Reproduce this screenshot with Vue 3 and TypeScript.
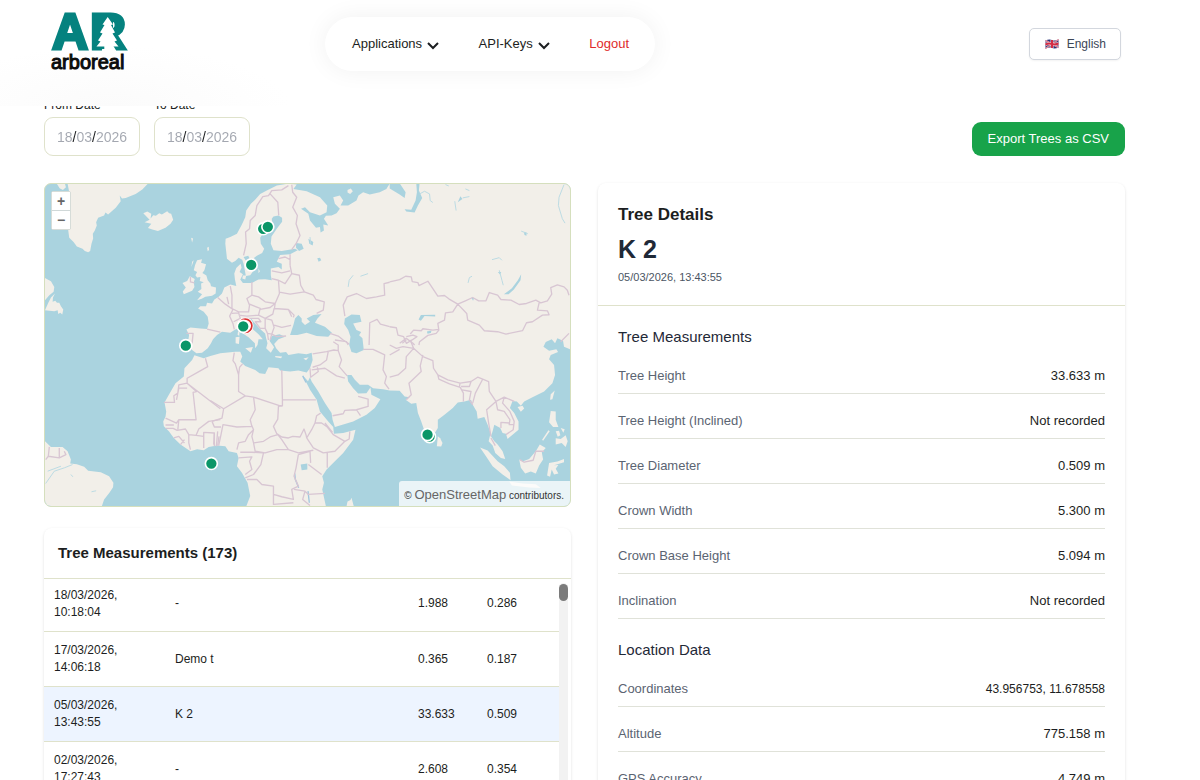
<script setup lang="ts">
import { ref } from 'vue'

interface TreeRow {
  id: number
  date: string
  time: string
  name: string
  height: string
  diameter: string
}

interface Detail {
  label: string
  value: string
  compact?: boolean
}

interface Section {
  title: string
  rows: Detail[]
}

const fromDate = ref('18/03/2026')
const toDate = ref('18/03/2026')
const selected = ref(3)

const trees: TreeRow[] = [
  { id: 1, date: '18/03/2026,', time: '10:18:04', name: '-', height: '1.988', diameter: '0.286' },
  { id: 2, date: '17/03/2026,', time: '14:06:18', name: 'Demo t', height: '0.365', diameter: '0.187' },
  { id: 3, date: '05/03/2026,', time: '13:43:55', name: 'K 2', height: '33.633', diameter: '0.509' },
  { id: 4, date: '02/03/2026,', time: '17:27:43', name: '-', height: '2.608', diameter: '0.354' },
]

const sections: Section[] = [
  {
    title: 'Tree Measurements',
    rows: [
      { label: 'Tree Height', value: '33.633 m' },
      { label: 'Tree Height (Inclined)', value: 'Not recorded' },
      { label: 'Tree Diameter', value: '0.509 m' },
      { label: 'Crown Width', value: '5.300 m' },
      { label: 'Crown Base Height', value: '5.094 m' },
      { label: 'Inclination', value: 'Not recorded' },
    ],
  },
  {
    title: 'Location Data',
    rows: [
      { label: 'Coordinates', value: '43.956753, 11.678558', compact: true },
      { label: 'Altitude', value: '775.158 m' },
      { label: 'GPS Accuracy', value: '4.749 m' },
    ],
  },
]

const markers = [
  { x: 789, y: 685 },
  { x: 803, y: 679 },
  { x: 753, y: 794 },
  { x: 556, y: 1037 },
  { x: 633, y: 1392 },
  { x: 1290, y: 1311 },
  { x: 1284, y: 1305 },
]
</script>

<template>
  <div class="page">
    <header class="topbar">
      <a class="logo" href="#" aria-label="arboreal home">
        <svg viewBox="0 0 78 62" width="78" height="62">
          <text x="1" y="37" class="logo-mark">A</text>
          <text x="39" y="37" class="logo-mark">R</text>
          <path d="M46 6 H62 V22 H58 V37 H46 Z" fill="#05827f" />
          <path
            d="M56.7 5 L62 12.500 L60 13 L64 20.500 L61.500 21.500 L66 28.500 L63.500 29.500 L67.500 34.500 L59.700 34.500 L59.700 39 L53.300 39 L53.300 34.500 L45.500 34.500 L49.500 29.500 L47 28.500 L51.500 21.500 L49 20.500 L53.500 13 L51.500 12.500 Z"
            fill="#fff"
          />
          <text x="0" y="57" class="logo-word">arboreal</text>
        </svg>
      </a>
      <nav class="menu">
        <button type="button" class="menu-item">
          Applications
          <svg viewBox="0 0 12 12" width="12" height="12"><path d="M1 4 L6 9 L11 4" /></svg>
        </button>
        <button type="button" class="menu-item">
          API-Keys
          <svg viewBox="0 0 12 12" width="12" height="12"><path d="M1 4 L6 9 L11 4" /></svg>
        </button>
        <a href="#" class="logout">Logout</a>
      </nav>
      <button type="button" class="language">
        <svg viewBox="0 0 28 20" width="14" height="10">
          <path d="M1 3 Q8 0 14 2 T27 1 V17 Q20 20 14 18 T1 19 Z" fill="#29337a" />
          <path d="M1 3 L27 17 M27 1 L1 19" stroke="#e8b9c4" stroke-width="3" />
          <path d="M1 3 L27 17 M27 1 L1 19" stroke="#d22c44" stroke-width="1" />
          <path d="M14 2 V18 M1 11 Q8 8 14 10 T27 9" stroke="#f3d5da" stroke-width="6" fill="none" />
          <path d="M14 2 V18 M1 11 Q8 8 14 10 T27 9" stroke="#d22c44" stroke-width="4" fill="none" />
        </svg>
        English
      </button>
    </header>

    <main class="content">
      <div class="filters">
        <div class="field">
          <label for="from-date">From Date</label>
          <input id="from-date" v-model="fromDate" type="text" />
        </div>
        <div class="field">
          <label for="to-date">To Date</label>
          <input id="to-date" v-model="toDate" type="text" />
        </div>
        <button type="button" class="export">Export Trees as CSV</button>
      </div>

      <div class="columns">
        <div class="left">
          <section class="map" aria-label="Map of measured trees">
            <svg class="world" viewBox="132 549 1581 972" preserveAspectRatio="xMidYMid slice">
              <g class="land">
                <!-- Greenland, Iceland, Newfoundland -->
                <path d="M200 549 L206 580 L202 690 L205 712 L218 725 L228 738 L245 745 L252 752 L262 756 L268 752 L272 730 L277 714 L276 700 L282 690 L288 675 L286 665 L292 652 L310 645 L314 636 L322 642 L345 622 L360 602 L357 585 L364 594 L375 592 L405 580 L425 567 L442 549 Z" />
                <path d="M168 550 L176 563 L186 568 L195 560 L192 549 Z" />
                <path d="M428 638 L440 633 L452 640 L450 654 L458 644 L466 646 L476 638 L484 642 L500 632 L506 638 L512 640 L518 658 L510 670 L495 682 L472 692 L455 687 L442 683 L452 670 L432 665 L447 658 Z" />
                <path d="M132 833 L140 838 L150 843 L160 860 L158 875 L145 885 L132 900 Z" />
                <path d="M162 880 L156 892 L155 905 L163 902 L168 908 L175 908 L180 918 L187 928 L184 943 L178 938 L172 942 L170 930 L160 933 L132 930 L142 908 L150 892 Z" />
                <!-- British Isles -->
                <path d="M590 780 L605 777 L602 787 L617 792 L612 810 L606 818 L618 826 L622 840 L630 850 L632 858 L647 862 L646 880 L635 887 L615 890 L604 896 L590 900 L600 888 L605 882 L592 875 L603 866 L602 850 L610 846 L598 842 L600 830 L590 832 L585 825 L590 815 L580 810 L584 794 Z" />
                <path d="M568 828 L583 836 L580 846 L582 860 L575 872 L550 882 L547 874 L556 862 L546 848 L560 842 Z" />
                <path d="M572 712 l6 2 l-3 12 z M620 742 l5 -3 l1 10 l-4 4 z M575 784 l5 -4 l-7 20 z" />
                <!-- Eurasia and Africa -->
                <path
                  d="M588 1060 L575 1050 L562 1030 L566 1005 L558 988 L570 982 L600 985 L620 987 L625 970 L622 950 L610 935 L593 925 L600 918 L617 918 L620 908 L635 910 L642 898 L655 890 L665 880 L672 862 L690 853 L708 857 L704 838 L702 820 L708 803 L721 790 L724 802 L718 815 L728 822 L720 838 L728 848 L755 848 L775 838 L795 837 L815 840 L812 825 L812 805 L835 800 L845 808 L845 790 L830 784 L840 764 L870 762 L893 750 L885 745 L845 752 L820 750 L812 730 L814 708 L830 685 L835 678 L846 664 L846 652 L835 645 L820 648 L815 655 L818 680 L788 700 L780 712 L782 730 L792 745 L786 758 L770 766 L762 772 L768 800 L750 825 L737 827 L730 790 L726 778 L715 772 L705 782 L695 787 L680 775 L675 730 L676 715 L690 710 L710 700 L725 672 L735 650 L738 630 L752 610 L764 598 L780 580 L800 570 L830 555 L865 549 L890 552 L880 565 L920 572 L960 590 L982 615 L980 635 L960 645 L930 635 L915 620 L903 625 L925 640 L930 660 L948 682 L960 680 L962 696 L972 690 L970 672 L985 675 L972 655 L978 646 L995 645 L1010 638 L1020 625 L1005 610 L1000 590 L1020 585 L1030 600 L1022 615 L1045 615 L1070 600 L1076 585 L1090 575 L1110 582 L1140 575 L1160 565 L1170 549 L1713 549
                  L1713 1048 L1695 1040 L1692 1022 L1675 1015 L1668 1030 L1658 1018 L1640 1026 L1633 1040 L1650 1052 L1672 1048 L1677 1056 L1655 1065 L1650 1078 L1665 1095 L1668 1125 L1660 1150 L1635 1175 L1600 1192 L1575 1205 L1565 1218 L1553 1205 L1540 1204 L1532 1225 L1545 1240 L1558 1265 L1558 1290 L1540 1305 L1525 1318 L1520 1302 L1510 1300 L1503 1285 L1485 1275 L1480 1295 L1475 1310 L1485 1325 L1495 1335 L1510 1355 L1518 1378 L1505 1375 L1488 1360 L1480 1338 L1468 1325 L1474 1300 L1465 1275 L1455 1252 L1435 1257 L1432 1235 L1420 1215 L1415 1200 L1395 1205 L1375 1208 L1360 1225 L1335 1245 L1315 1260 L1315 1285 L1300 1310 L1290 1322 L1275 1295 L1265 1265 L1255 1240 L1250 1210 L1235 1212 L1218 1200 L1230 1192 L1215 1190 L1200 1173 L1170 1172
                  L1150 1168 L1120 1165 L1105 1155 L1080 1155 L1065 1140 L1055 1125 L1042 1125 L1045 1145 L1060 1165 L1075 1181 L1100 1180 L1112 1163 L1115 1185 L1142 1198 L1125 1225 L1100 1245 L1060 1265 L1005 1282 L998 1260 L995 1240 L975 1210 L955 1175 L935 1145 L930 1132 L924 1144 L908 1126 L930 1170 L950 1200 L960 1235 L985 1265 L1000 1282 L1002 1302 L1030 1300 L1067 1290 L1060 1320 L1030 1360 L1005 1385 L980 1410 L967 1430 L972 1450 L967 1470 L978 1521
                  L738 1521 L750 1490 L742 1450 L725 1420 L710 1400 L715 1375 L710 1360 L685 1355 L675 1340 L650 1338 L625 1342 L610 1352 L590 1349 L570 1355 L540 1335 L520 1315 L505 1295 L490 1280 L488 1265 L495 1250 L497 1235 L492 1208 L505 1185 L525 1150 L550 1130 L552 1105 L575 1080 L582 1066 L610 1075 L630 1068 L660 1060 L705 1055 L720 1055 L726 1070 L720 1085 L735 1098 L765 1110 L778 1120 L795 1122 L805 1102 L835 1105 L840 1112 L870 1115 L895 1112 L920 1118 L930 1105 L938 1080 L935 1058 L920 1063 L895 1060 L865 1065 L858 1056 L840 1058 L828 1045 L822 1032 L835 1018 L855 1010 L838 1003 L815 1008 L808 1022 L822 1042 L812 1058 L798 1045 L802 1030 L798 1015 L795 1000 L778 985 L760 965 L753 955 L747 962 L755 985 L775 1003 L788 1018 L775 1018 L772 1035 L765 1045 L764 1030 L745 1012 L728 1000 L715 985 L705 988 L690 998 L665 995 L650 1005 L638 1018 L632 1030 L622 1045 L605 1058 Z"
                />
                <path d="M735 1045 L758 1041 L752 1058 Z M706 1012 L718 1010 L716 1032 L706 1030 Z M713 995 L718 993 L717 1007 L712 1005 Z M825 1068 L846 1070 L843 1075 L826 1072 Z M910 1076 L926 1072 L918 1081 Z" />
                <path d="M728 826 l10 0 l-3 12 l-9 -3 z M1043 568 l10 -4 l6 8 l-8 8 l-8 -4 z M775 805 l4 8 l-4 6 z" />
                <!-- South America -->
                <path d="M132 1325 L150 1342 L185 1342 L200 1355 L210 1380 L208 1392 L228 1394 L250 1402 L262 1414 L300 1418 L325 1430 L338 1450 L337 1463 L326 1480 L310 1500 L303 1521 L132 1521 Z" />
                <path d="M1040 1521 L1043 1506 L1052 1502 L1055 1495 L1062 1521 Z" />
                <!-- South-East Asia -->
                <g transform="translate(1170 1020)">
                  <path d="M145 290 L152 296 L159 310 L155 321 L142 320 Z" />
                  <path d="M385 202 L400 198 L405 206 L395 216 Z M497 152 L490 178 L483 180 L485 163 Z" />
                  <path d="M485 214 L500 215 L500 240 L508 262 L492 262 L480 248 Z" />
                  <path d="M500 296 L515 298 L530 287 L536 305 L530 322 L518 310 L500 315 Z" />
                  <path d="M515 265 l12 4 l-4 10 z M500 275 l10 -2 l4 14 l-8 4 z M478 272 l4 3 l-20 28 l-3 -3 z" />
                  <path d="M390 360 L400 366 L420 358 L440 335 L452 315 L470 325 L458 338 L462 360 L450 378 L440 402 L425 396 L408 402 L395 385 Z" />
                  <path d="M272 324 L295 333 L325 365 L345 380 L362 400 L364 422 L340 405 L310 380 L290 350 Z" />
                  <path d="M480 370 L505 366 L525 358 L525 368 L495 377 L508 376 L500 388 L508 402 L495 405 L488 390 L483 412 L474 408 Z" />
                  <path d="M360 426 L400 432 L440 434 L455 446 L420 444 L368 438 Z" />
                </g>
              </g>
              <g class="water">
                <path d="M875 990 L870 1005 L892 1005 L920 998 L950 1008 L985 1010 L996 998 L975 980 L945 968 L952 956 L965 942 L940 945 L920 955 L930 965 L915 975 L905 965 L905 955 L895 945 L885 955 L880 975 Z" />
                <path d="M1035 955 L1055 943 L1080 945 L1085 965 L1060 970 L1070 990 L1084 996 L1078 1006 L1088 1015 L1092 1050 L1070 1060 L1055 1056 L1048 1035 L1052 1010 L1045 990 L1033 972 Z" />
                <path d="M888 728 L905 730 L911 745 L897 752 L888 742 Z M925 715 L940 725 L938 735 L928 730 Z M952 774 l8 -2 l4 8 l-8 4 z M730 770 l14 -4 l4 8 l-12 6 z" />
                <path d="M902 1395 L922 1392 L922 1410 L905 1412 Z" />
                <g transform="translate(1170 540)">
                  <path d="M0 8 L30 8 L48 35 L45 52 L30 42 L10 30 L0 24 Z" />
                  <path d="M80 8 L90 8 L88 30 L98 52 L85 75 L75 96 L50 93 L45 86 L65 88 L78 60 L82 35 Z" />
                  <path d="M396 282 L394 300 L374 328 L358 342 L344 342 L368 324 L386 300 Z" />
                  <path d="M137 404 L137 409 L105 408 L94 422 L87 418 L94 405 Z" />
                  <path d="M205 65 l8 -18 l6 8 z M112 454 l14 -3 l-2 8 l-10 2 z M246 352 l8 2 l-3 8 z M404 154 l8 2 l0 10 l-6 -2 z M326 275 l10 0 l-4 8 z" />
                </g>
              </g>
              <g class="rivers">
                <path transform="translate(1170 540)" d="M90 40 L105 32 L120 40 L122 60 L130 66 M525 12 L510 50 L508 75 L520 115 L528 128 M308 238 L330 232 L338 240 M330 270 L338 300 L342 315 M236 308 L240 292 L248 288 M200 90 L196 62 M228 25 L240 30 M220 52 L240 48 M168 12 L178 16 M396 152 L416 160" />
                <path transform="translate(630 540)" d="M415 320 L418 300 L430 285 M452 288 L475 280 M300 170 L302 190" />
                <path transform="translate(120 1020)" d="M14 432 L40 395 L70 385 L95 375 M90 405 L96 412 M152 457 L166 454 M20 395 L60 380" />
              </g>
              <path class="lakes" transform="translate(630 1020)" d="M254 402 L256 420 L266 445 M294 455 L298 490 M278 108 L288 128" />

              <g class="borders">
                <!-- Western Europe -->
                <path transform="translate(120 540)" d="M438 460 L458 460 L455 490 M500 447 L540 456 M450 290 L450 305 L462 308" />
                <!-- Northern and central Europe, western Russia -->
                <path
                  transform="translate(630 540)"
                  d="M235 15 L215 28 L185 30 L175 45 L158 48 L140 75 L135 105 L120 120 L118 145 L106 155 L108 190 L100 225 M180 40 L203 65 L206 105 M245 12 L248 35 L260 50 L248 80 L262 105 L258 130 L270 165 L258 190 L245 208
                  M240 222 L240 255 M205 235 L225 230 L240 238 M185 272 L215 278 L240 272 M240 255 L245 280 L225 310 L205 300 L185 295 M205 300 L208 340 L195 370 L165 365 L145 350 L125 345 L125 305 M245 280 L268 285 L272 315 L283 335 L240 342 L208 336 M283 335 L310 345 L318 358 L343 365 L340 390 L320 400 M195 370 L193 385 L235 388 L252 405 L250 412 M235 388 L245 410
                  M60 318 L65 345 L65 385 L85 395 L115 395 L118 375 L110 355 L125 345 M22 352 L45 372 L68 388 L58 408 L68 430 L72 448 M50 350 L55 372 M65 400 L85 398 L90 415 L70 425 M85 405 L110 408 L145 405 L150 385 L118 372 M150 388 L180 382 L192 372 M145 405 L165 415 L188 402 L192 385 M100 415 L145 415 L152 425 L135 425 L150 445 L165 445 L165 415 M165 445 L172 460 L185 462 L192 442 L185 420 L165 415 M192 435 L215 442 L243 436 M185 462 L200 470 L228 468 M172 460 L175 480 M185 462 L180 480
                  M360 460 L385 468 L400 480 L418 492 M405 408 L400 375 L412 350 L440 340 L470 355 L500 350 L525 345 L523 310 L540 306 M478 495 L480 428 L502 418 L512 432 L540 440"
                />
                <!-- Central Asia, Mongolia, China -->
                <path
                  transform="translate(1170 540)"
                  d="M0 305 L30 298 L48 288 L65 290 L68 304 L85 307 L88 316 L115 303 L145 348 L165 346 L178 356 L205 372 L228 362 L250 352 L268 362 L290 362 L300 337 L325 345 L335 358 L365 360 L390 373 L412 370 L440 360 L455 368 L475 362 L488 342 L485 322 L505 314 L525 320 L535 330 L540 345 M205 372 L232 400 L235 420 L270 435 L285 452 L325 455 L350 462 L400 452 L412 428 L430 425 L460 405 L480 404 L475 392 L445 390 L450 368
                  M205 372 L190 395 L168 398 L165 420 L145 430 L148 450 L140 460 L115 466 L90 485 L88 495 M62 462 L72 450 L95 452 L100 446 L130 450 L148 448 M0 440 L20 443 L25 465 L42 470 L50 490 L70 478 L82 470 L70 465 L50 470 M30 490 L50 475 L70 490 L75 495 M540 460 L515 485"
                />
                <!-- South and South-East Asia -->
                <path
                  transform="translate(1170 1020)"
                  d="M38 10 L50 0 M62 0 L72 25 L100 50 L130 62 L132 85 L145 105 L175 120 L212 130 L245 125 L265 112 L280 118 L298 125 L300 155 L320 185 L345 172 L375 185 M100 45 L92 78 L95 95 L58 130 L65 165 L50 180 M72 25 L50 50 L48 85 L25 105 L0 112 M0 15 L20 25 L40 20 L72 25 M0 45 L30 28 M145 105 L148 118 L180 132 L210 142 L212 128 M215 140 L240 140 L245 125 M212 142 L222 160 L222 185 M218 150 L245 155 L240 180 L250 195 M280 118 L258 160 L250 190 M320 185 L292 210 L298 250 L305 290 M320 185 L325 210 L345 215 L362 240 L360 255 L372 255 M345 172 L340 190 L362 215 L375 245 L372 270 L350 285 M335 265 L335 248 L360 250 M305 295 L318 318 M392 360 L405 368 L432 362 L440 335 L465 335"
                />
                <!-- Middle East, northern and central Africa -->
                <path
                  transform="translate(630 1020)"
                  d="M308 42 L350 35 L372 30 L385 32 M370 5 L385 15 L385 32 M355 35 L350 60 L330 75 L308 82 M385 32 L395 60 L388 80 L412 108 M305 90 L345 85 L380 108 L405 115 M300 85 L302 112 L325 95 L322 82 M368 228 L400 222 L405 212 L440 210 L475 200 L475 178 L445 170 M440 210 L452 228 M460 28 L490 28 L525 45 L520 90 L530 110 L525 130 L538 148 M375 0 L410 5 L415 15
                  M215 90 L217 180 L318 180 M217 180 L217 198 L205 200 L203 238 L190 260 L200 282 L215 292 L235 295 L248 290 L270 292 L282 268 L288 285 L290 295 M215 200 L130 172 L105 168 L85 155 L85 105 L75 72 L68 62 L72 38 M85 105 L88 82 L97 72 M105 168 L40 207 L0 182 M40 207 L35 235 L5 245 M130 172 L135 210 L120 240 L125 260 L80 262 L38 255 L32 285 L25 318 M5 245 L12 262 L32 262 M125 258 L130 270 L115 285 L105 305 L85 310 L80 330 M203 285 L180 292 L160 305 L130 310 L125 290 L130 270 M130 310 L135 335 L165 340 L200 330 L235 330 L215 300 L203 285
                  M290 295 L310 325 L340 340 L375 335 L405 305 L370 285 L352 262 L335 250 L315 250 L305 270 L290 295 M315 250 L320 228 L332 220 M345 250 L368 278 M405 305 L418 298 L420 275 M352 340 L352 385 M295 375 L335 405 M265 345 L300 335 L302 370 M235 330 L265 340 L310 332 M160 340 L152 375 L130 405 L105 415 M265 345 L258 385 L252 410 L265 440 L245 450 L250 480 L215 472 L190 465 L190 440 L155 435 L140 420 L110 420 M85 355 L125 352 L118 365 L125 390 L105 405 M190 465 L190 495 L250 490 M252 450 L285 455 L295 465 L345 462 M285 455 L278 480 L300 498 M160 340 L125 338 L90 338 M22 275 L18 320 M12 280 L12 320"
                />
                <!-- West Africa, Guianas -->
                <path
                  transform="translate(120 1020)"
                  d="M495 55 L502 80 L470 98 L440 115 L440 130 L540 207 M440 130 L415 135 L412 160 L400 168 L402 188 L370 188 M440 145 L415 145 L408 180 M440 130 L468 155 L458 158 L467 240 L415 240 L408 250 L375 235 M375 256 L400 256 M375 266 L398 266 L410 272 L435 268 L445 285 L467 287 L475 268 L505 245 L540 240 M415 240 L412 270 M445 285 L445 310 L450 330 M490 290 L490 325 M467 287 L490 290 L490 278 L522 280 L520 315 M400 295 L415 290 L432 310 M420 315 L432 300 M25 322 L22 350 L14 360 M55 325 L55 355 L75 345 L70 335 M22 350 L55 355 M536 290 L532 318"
                />
              </g>

              <circle cx="735" cy="977" r="25" fill="#fff" />
              <circle class="ring" cx="735" cy="977" r="20" />
              <circle v-for="(m, i) in markers" :key="i" class="marker" :cx="m.x" :cy="m.y" r="18" />
              <circle class="marker" cx="729" cy="979" r="18" />
            </svg>
            <div class="zoom">
              <button type="button" aria-label="Zoom in">+</button>
              <button type="button" aria-label="Zoom out">−</button>
            </div>
            <p class="credit">© <a href="#">OpenStreetMap</a> contributors.</p>
          </section>

          <section class="card list">
            <h2>Tree Measurements (173)</h2>
            <div class="scroller">
              <table>
                <colgroup>
                  <col class="c-date" />
                  <col class="c-name" />
                  <col class="c-height" />
                  <col class="c-diameter" />
                </colgroup>
                <tbody>
                  <tr v-for="t in trees" :key="t.id" :class="{ active: t.id === selected }" @click="selected = t.id">
                    <td>{{ t.date }}<br />{{ t.time }}</td>
                    <td>{{ t.name }}</td>
                    <td>{{ t.height }}</td>
                    <td>{{ t.diameter }}</td>
                  </tr>
                </tbody>
              </table>
              <div class="track"><div class="thumb"></div></div>
            </div>
          </section>
        </div>

        <section class="card details">
          <div class="summary">
            <h2>Tree Details</h2>
            <p class="name">K 2</p>
            <p class="stamp">05/03/2026, 13:43:55</p>
          </div>
          <div v-for="s in sections" :key="s.title" class="group">
            <h3>{{ s.title }}</h3>
            <dl>
              <div v-for="r in s.rows" :key="r.label" class="row">
                <dt>{{ r.label }}</dt>
                <dd :class="{ compact: r.compact }">{{ r.value }}</dd>
              </div>
            </dl>
          </div>
        </section>
      </div>
    </main>
  </div>
</template>

<style>
body {
  margin: 0;
  background: #fff;
}
</style>

<style scoped>
.page {
  display: flex;
  flex-direction: column;
  height: 100vh;
  overflow: hidden;
  font-family: "Liberation Sans", Arial, sans-serif;
  font-size: 13px;
  line-height: 20px;
  color: #1c1e21;
}
.page * {
  box-sizing: border-box;
}
button,
input {
  font: inherit;
  color: inherit;
}
h2,
h3,
p,
dl,
dd {
  margin: 0;
}

.topbar {
  display: flex;
  align-items: flex-start;
  flex: none;
  height: 106px;
  padding: 12px 79px 0 51px;
  background: radial-gradient(ellipse 180px 60px at 110px 106px, #fbfbfb, #fff);
}
.logo {
  display: block;
  flex: none;
  height: 62px;
}
.logo svg {
  display: block;
}
.logo-mark {
  font-size: 50px;
  font-weight: 700;
  fill: #05827f;
  stroke: #05827f;
  stroke-width: 3;
}
.logo-word {
  font-size: 20px;
  fill: #0b0b0b;
  stroke: #0b0b0b;
  stroke-width: 1;
}
.menu {
  display: flex;
  align-items: center;
  justify-content: space-between;
  width: 330px;
  height: 54px;
  margin: 5px 0 0 196px;
  padding: 0 26px 0 27px;
  border-radius: 27px;
  background: #fff;
  box-shadow: 0 0 24px rgba(0, 0, 0, 0.06);
}
.menu-item {
  display: flex;
  align-items: center;
  gap: 5px;
  padding: 0;
  border: 0;
  background: none;
}
.menu-item svg {
  margin-top: 2px;
  fill: none;
  stroke: #1c1e21;
  stroke-width: 2;
}
.logout {
  color: #e02b2b;
  text-decoration: none;
}
.language {
  display: flex;
  align-items: center;
  gap: 8px;
  height: 32px;
  margin: 16px 0 0 auto;
  padding: 0 14px 0 15px;
  border: 1px solid #d3d7de;
  border-radius: 5px;
  background: #fff;
  font-size: 12px;
  color: #3c4656;
  box-shadow: 0 1px 2px rgba(0, 0, 0, 0.05);
}

.content {
  flex: 1;
  min-height: 0;
  overflow: hidden;
  padding: 0 75px 0 44px;
}
.filters {
  display: flex;
  align-items: flex-end;
  gap: 14px;
  margin-top: -10px;
}
.field {
  display: flex;
  flex-direction: column;
  gap: 3px;
}
.field label {
  font-size: 12px;
  line-height: 18px;
}
.field input {
  width: 96px;
  height: 39px;
  padding: 0 12px;
  border: 1px solid #dfe2cb;
  border-radius: 9px;
  font-size: 14px;
  color: transparent;
  caret-color: #1c1e21;
  background: linear-gradient(90deg, #a3a7b0 15px, #1c1e21 15px 20px, #a3a7b0 20px 35px, #1c1e21 35px 39px, #a3a7b0 39px);
  background-origin: content-box;
  background-clip: text;
}
.export {
  height: 34px;
  margin-left: auto;
  padding: 0 16px;
  border: 0;
  border-radius: 9px;
  background: #18a34a;
  color: #fff;
}

.columns {
  display: grid;
  grid-template-columns: 1fr 1fr;
  gap: 27px;
  margin-top: 27px;
}
.left {
  display: flex;
  flex-direction: column;
  gap: 21px;
}
.map {
  position: relative;
  aspect-ratio: 527 / 324;
  overflow: hidden;
  border: 1px solid #d5dfbd;
  border-radius: 7px;
  background: #aad3df;
}
.world {
  display: block;
  width: 100%;
  height: 100%;
}
.land {
  fill: #f2efe9;
}
.water {
  fill: #aad3df;
}
.rivers,
.lakes {
  fill: none;
  stroke: #bcdbe3;
  stroke-width: 3;
}
.lakes {
  stroke: #9fc6df;
  stroke-width: 4;
}
.borders {
  fill: none;
  stroke: #d8c6d3;
  stroke-width: 4;
  stroke-linejoin: round;
}
.marker {
  fill: #0b9668;
  stroke: #fff;
  stroke-width: 5;
}
.ring {
  fill: #fff;
  stroke: #dc2f2f;
  stroke-width: 5;
}
.zoom {
  position: absolute;
  top: 7px;
  left: 6px;
  display: flex;
  flex-direction: column;
  gap: 1px;
  border: 1px solid #d6dcd8;
  border-radius: 2px;
  background: #d0d8d8;
}
.zoom button {
  width: 18px;
  height: 18px;
  padding: 0;
  border: 0;
  background: #fff;
  font-size: 14px;
  font-weight: 700;
  line-height: 18px;
  color: #666;
}
.credit {
  position: absolute;
  right: 0;
  bottom: 0;
  padding: 3px 6px 0 5px;
  border-radius: 3px 0 0 0;
  background: rgba(255, 255, 255, 0.75);
  font-size: 10px;
  line-height: 21px;
  color: #333;
}
.credit a {
  font-size: 13px;
  color: #666;
  text-decoration: none;
}

.card {
  border-radius: 8px;
  background: #fff;
  box-shadow: 0 1px 3px rgba(0, 0, 0, 0.12);
}
.list h2 {
  padding: 13px 14px 13px;
  border-bottom: 1px solid #dfe2cb;
  font-size: 15px;
  line-height: 24px;
}
.scroller {
  display: flex;
  height: 324px;
  overflow: hidden;
  padding-right: 3px;
}
table {
  flex: 1;
  align-self: flex-start;
  margin-top: -3px;
  border-collapse: collapse;
  table-layout: fixed;
  font-size: 12px;
  line-height: 17px;
}
.c-date {
  width: 121px;
}
.c-height {
  width: 69px;
}
.c-diameter {
  width: 82px;
}
td {
  height: 55px;
  padding: 1px 10px 0;
  border-bottom: 1px solid #dfe2cb;
}
tr.active {
  background: #edf4ff;
}
.track {
  flex: none;
  width: 9px;
  margin-top: 4px;
  border-radius: 5px 5px 0 0;
  background: #f2f2f2;
}
.thumb {
  height: 17px;
  margin-top: 1px;
  border-radius: 5px;
  background: #7b7b7b;
}

.summary {
  padding: 18px 20px 20px;
  border-bottom: 1px solid #dfe2cb;
}
.summary h2 {
  font-size: 17px;
  line-height: 28px;
}
.name {
  font-size: 25px;
  font-weight: 700;
  line-height: 40px;
  color: #1f2937;
}
.stamp {
  font-size: 11px;
  line-height: 16px;
  color: #4b5563;
}
.group {
  padding: 19px 20px 0;
}
.group h3 {
  font-size: 15px;
  font-weight: 400;
  line-height: 24px;
  color: #1f2937;
}
.row {
  display: flex;
  justify-content: space-between;
  padding: 17px 0 7px;
  border-bottom: 1px solid #e0e2d9;
}
dt {
  color: #5b6472;
}
.compact {
  font-size: 12px;
}
</style>
